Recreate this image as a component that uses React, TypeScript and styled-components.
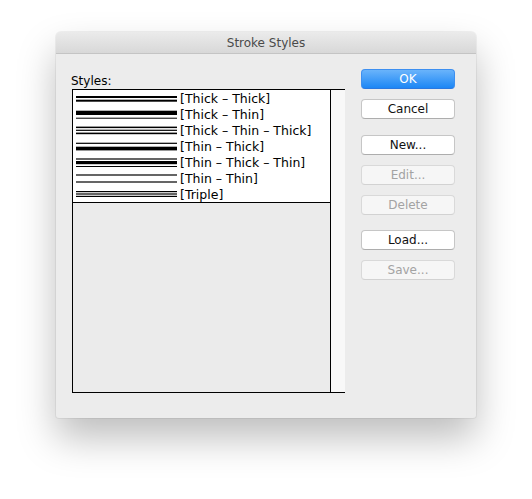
import React from "react";
import styled, { createGlobalStyle } from "styled-components";

const GlobalStyle = createGlobalStyle`
  html, body {
    margin: 0;
    padding: 0;
    background: #ffffff;
  }
  body {
    font-family: "DejaVu Sans", "Open Sans", sans-serif;
    font-size: 12px;
    color: #000;
  }
`;

const Page = styled.div`
  padding: 32px 0 0 56px;
  height: 499px;
  box-sizing: border-box;
`;

const Dialog = styled.div`
  width: 420px;
  height: 386px;
  background: #ececec;
  border-radius: 5px 5px 3px 3px;
  box-shadow: 0 0 0 1px rgba(0, 0, 0, 0.05), 0 20px 38px rgba(0, 0, 0, 0.26);
  display: flex;
  flex-direction: column;
  overflow: hidden;
`;

const TitleBar = styled.div`
  height: 22px;
  box-sizing: border-box;
  border-bottom: 1px solid #c4c4c4;
  background: linear-gradient(#ebebeb, #d8d8d8);
  color: #4a4a4a;
  line-height: 22px;
  text-align: center;
`;

const Body = styled.div`
  display: grid;
  grid-template-columns: 273px 94px;
  column-gap: 16px;
  padding: 15px 0 0 16px;
`;

const LeftColumn = styled.div`
  display: flex;
  flex-direction: column;
`;

const Label = styled.div`
  height: 20px;
  box-sizing: border-box;
  padding-top: 2px;
  line-height: 20px;
  margin-left: -1px;
`;

const ListBox = styled.div`
  height: 304px;
  box-sizing: border-box;
  display: flex;
  border: 1px solid #000;
  border-right: none;
`;

const ListPane = styled.div`
  flex: 1;
  background: #ebebeb;
  border-right: 1px solid #000;
`;

const Rows = styled.div`
  background: #fff;
  border-bottom: 1px solid #000;
`;

const Row = styled.div`
  height: 16px;
  display: flex;
  align-items: center;
  gap: 3px;
  padding-left: 3px;
  font-size: 12.5px;
  line-height: 16px;
  white-space: nowrap;
`;

const RowName = styled.span`
  padding-top: 2px;
`;

const Scrollbar = styled.div`
  width: 14px;
  background: #f8f8f8;
`;

const ButtonColumn = styled.div`
  display: flex;
  flex-direction: column;
  gap: 15px;
`;

const ButtonGroup = styled.div<{ $extra?: number }>`
  display: flex;
  flex-direction: column;
  gap: 10px;
  margin-bottom: ${(p) => p.$extra ?? 0}px;
`;

const Button = styled.div<{ $primary?: boolean; $disabled?: boolean }>`
  height: 20px;
  box-sizing: border-box;
  border-radius: 4px;
  text-align: center;
  line-height: 18px;
  border: 1px solid
    ${(p) => (p.$primary ? "#3d8ff0" : p.$disabled ? "#d9d9d9" : "#c6c6c6")};
  border-bottom-color: ${(p) =>
    p.$primary ? "#2b78e0" : p.$disabled ? "#d2d2d2" : "#adadad"};
  background: ${(p) =>
    p.$primary
      ? "linear-gradient(#6ab4fb, #1d87f5)"
      : p.$disabled
      ? "#f6f6f6"
      : "#ffffff"};
  color: ${(p) => (p.$primary ? "#fff" : p.$disabled ? "#a3a3a3" : "#111")};
`;

type Line = { y: number; h: number };

const strokes: { name: string; lines: Line[] }[] = [
  { name: "[Thick – Thick]", lines: [{ y: 6, h: 2 }, { y: 9.7, h: 2 }] },
  { name: "[Thick – Thin]", lines: [{ y: 4.7, h: 4.3 }, { y: 11.7, h: 1 }] },
  {
    name: "[Thick – Thin – Thick]",
    lines: [{ y: 4.6, h: 1.5 }, { y: 7.7, h: 1.2 }, { y: 10.6, h: 1.6 }],
  },
  { name: "[Thin – Thick]", lines: [{ y: 4.7, h: 1.2 }, { y: 8.7, h: 3.7 }] },
  {
    name: "[Thin – Thick – Thin]",
    lines: [{ y: 4.4, h: 1.2 }, { y: 7, h: 3.2 }, { y: 12, h: 1 }],
  },
  { name: "[Thin – Thin]", lines: [{ y: 4.4, h: 1.2 }, { y: 11.4, h: 1.2 }] },
  {
    name: "[Triple]",
    lines: [{ y: 5, h: 1.2 }, { y: 7.4, h: 1.2 }, { y: 9.8, h: 1.2 }],
  },
];

function StrokeSample({ lines }: { lines: Line[] }) {
  return (
    <svg width="101" height="16" viewBox="0 0 101 16" style={{ flex: "none" }}>
      {lines.map((l, i) => (
        <rect key={i} x="0" y={l.y} width="101" height={l.h} fill="#000" />
      ))}
    </svg>
  );
}

export default function App() {
  return (
    <Page>
      <GlobalStyle />
      <Dialog>
        <TitleBar>Stroke Styles</TitleBar>
        <Body>
          <LeftColumn>
            <Label>Styles:</Label>
            <ListBox>
              <ListPane>
                <Rows>
                  {strokes.map((s) => (
                    <Row key={s.name}>
                      <StrokeSample lines={s.lines} />
                      <RowName>{s.name}</RowName>
                    </Row>
                  ))}
                </Rows>
              </ListPane>
              <Scrollbar />
            </ListBox>
          </LeftColumn>
          <ButtonColumn>
            <ButtonGroup $extra={1}>
              <Button $primary>OK</Button>
              <Button>Cancel</Button>
            </ButtonGroup>
            <ButtonGroup>
              <Button>New...</Button>
              <Button $disabled>Edit...</Button>
              <Button $disabled>Delete</Button>
            </ButtonGroup>
            <ButtonGroup>
              <Button>Load...</Button>
              <Button $disabled>Save...</Button>
            </ButtonGroup>
          </ButtonColumn>
        </Body>
      </Dialog>
    </Page>
  );
}
